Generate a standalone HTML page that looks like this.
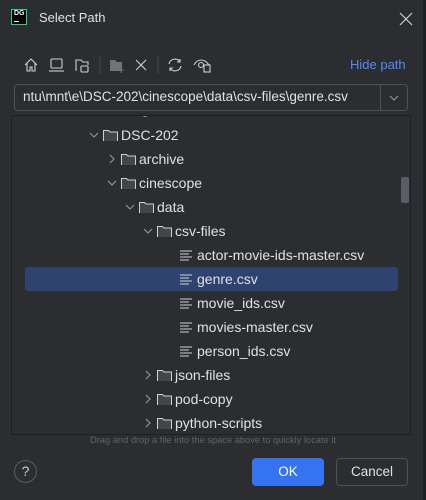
<!DOCTYPE html><html><head><style>
*{margin:0;padding:0;box-sizing:border-box}
body{width:426px;height:500px;background:#2b2d30;font-family:"Liberation Sans","DejaVu Sans",sans-serif;color:#dfe1e5;position:relative;overflow:hidden;font-size:13px}
.a{position:absolute}
.row{position:absolute;left:12px;width:398px;height:24px;line-height:24px;font-size:14px}
.selbg{position:absolute;left:25px;width:373px;height:24px;background:#2e436e;border-radius:3px}
.chev{position:absolute;top:0;font-size:11px;color:#9a9da3}
.fold{position:absolute;top:6px;width:15px;height:12px}
.file{position:absolute;top:6px}
.t{position:absolute;top:0}
</style></head><body>
<div class="a" style="right:0;top:0;width:3px;height:500px;background:#1e1f22"></div>
<div class="a" style="left:11px;top:9px;width:16px;height:16px;background:#000;border:1px solid #21d789;color:#fff;font-size:7px;font-weight:bold;line-height:8px;padding-left:2px">DG<div style="width:5px;height:1px;background:#fff;margin-top:3px"></div></div>
<div class="a" style="left:39px;top:10px;font-size:13px">Select Path</div>
<svg class="a" style="left:399px;top:12px" width="14" height="14"><path d="M1 1L13 13M13 1L1 13" stroke="#ced0d6" stroke-width="1.2"/></svg>
<svg class="a" style="left:22px;top:55px" width="190" height="20" fill="none" stroke="#ced0d6" stroke-width="1.1">
<path d="M3 10L9 4L15 10M5 8V16H8V12H10V16H13V8"/>
<rect x="29" y="4" width="11" height="9" rx="1"/><path d="M27 16H42"/>
<path d="M55 15H54V5H59L61 7H66V10"/><rect x="59" y="11" width="7" height="6" rx="1"/>
<line x1="78" y1="1" x2="78" y2="19" stroke="#43454a"/>
<path d="M88 5H93L95 7H100V16H88Z" fill="#6f737a" stroke="none"/><path d="M99 12V18M96 15H102" stroke="#6f737a"/>
<path d="M114 5L124 15M124 5L114 15"/>
<line x1="136" y1="1" x2="136" y2="19" stroke="#43454a"/>
<path d="M147 9A6 6 0 0 1 158 7M159 11A6 6 0 0 1 148 13M158 4V7H155M148 16V13H151"/>
<path d="M172 10C174 6 177 5 179 5C182 5 185 7 187 10"/><circle cx="179" cy="10" r="2.5"/><rect x="182" y="10" width="6" height="7" fill="#2b2d30"/>
</svg>
<div class="a" style="left:350px;top:57px;color:#548af7;font-size:13px">Hide path</div>
<div class="a" style="left:14px;top:84px;width:394px;height:27px;border:1px solid #4e5157;border-radius:4px;background:#2b2d30"></div>
<div class="a" style="left:380px;top:85px;width:1px;height:25px;background:#4e5157"></div>
<svg class="a" style="left:389px;top:94px" width="10" height="8"><path d="M1 2L5 6L9 2" stroke="#9a9da3" fill="none"/></svg>
<div class="a" style="left:23px;top:88px;font-size:13.5px;line-height:18px;white-space:nowrap;width:356px;overflow:hidden">ntu\mnt\e\DSC-202\cinescope\data\csv-files\genre.csv</div>
<div class="a" style="left:11px;top:115px;width:400px;height:320px;border:1px solid #1e1f22;background:#2b2d30;overflow:hidden">
<div class="a" style="left:130px;top:-3px;width:6px;height:4px;border:1px solid #9a9da3;border-top:none;border-radius:0 0 3px 3px"></div>
</div>
<div class="selbg" style="top:267px"></div>
<div class="a" style="left:401px;top:177px;width:8px;height:26px;background:#5a5d63;border-radius:2px"></div>
<div id="tree"></div>
<div class="a" style="left:0;top:435px;width:426px;text-align:center;font-size:9.3px;color:#5f6268">Drag and drop a file into the space above to quickly locate it</div>
<div class="a" style="left:14px;top:460px;width:23px;height:23px;border:1px solid #5a5d63;border-radius:50%;text-align:center;line-height:21px;font-size:14px;color:#ced0d6">?</div>
<div class="a" style="left:252px;top:458px;width:72px;height:28px;background:#3574f0;border-radius:4px;text-align:center;line-height:28px;color:#fff;font-size:13.5px">OK</div>
<div class="a" style="left:336px;top:458px;width:72px;height:28px;border:1px solid #4e5157;border-radius:4px;text-align:center;line-height:26px;color:#dfe1e5;font-size:13.5px">Cancel</div>
<script>
var rows=[[0,'d','o','DSC-202'],[1,'d','c','archive'],[1,'d','o','cinescope'],[2,'d','o','data'],[3,'d','o','csv-files'],[4,'f','','actor-movie-ids-master.csv'],[4,'f','','genre.csv',1],[4,'f','','movie_ids.csv'],[4,'f','','movies-master.csv'],[4,'f','','person_ids.csv'],[3,'d','c','json-files'],[3,'d','c','pod-copy'],[3,'d','c','python-scripts']];
var h='';rows.forEach(function(r,i){var y=123+i*24,x=93+r[0]*18-12;h+='<div class="row" style="top:'+y+'px">';
if(r[1]=='d'){h+='<svg class="chev" style="left:'+(x-4)+'px;top:7px" width="10" height="10"><path d="'+(r[2]=='o'?'M1 3L5 7L9 3':'M3 1L7 5L3 9')+'" stroke="#9a9da3" fill="none"/></svg>';
h+='<svg class="fold" style="left:'+(x+10)+'px" width="15" height="13"><path d="M0.5 1.5H5.5L7 3H14.5V12.5H0.5Z" fill="#43454a" stroke="#ced0d6"/></svg><span class="t" style="left:'+(x+28)+'px">'+r[3]+'</span>';}
else{var fx=x+15;h+='<svg class="file" style="left:'+fx+'px" width="13" height="12"><path d="M0 2H12M0 5H9M0 8H12M0 11H9" stroke="#ced0d6"/></svg><span class="t" style="left:'+(fx+17)+'px">'+r[3]+'</span>';}
h+='</div>';});document.getElementById('tree').innerHTML=h;
</script>
</body></html>
